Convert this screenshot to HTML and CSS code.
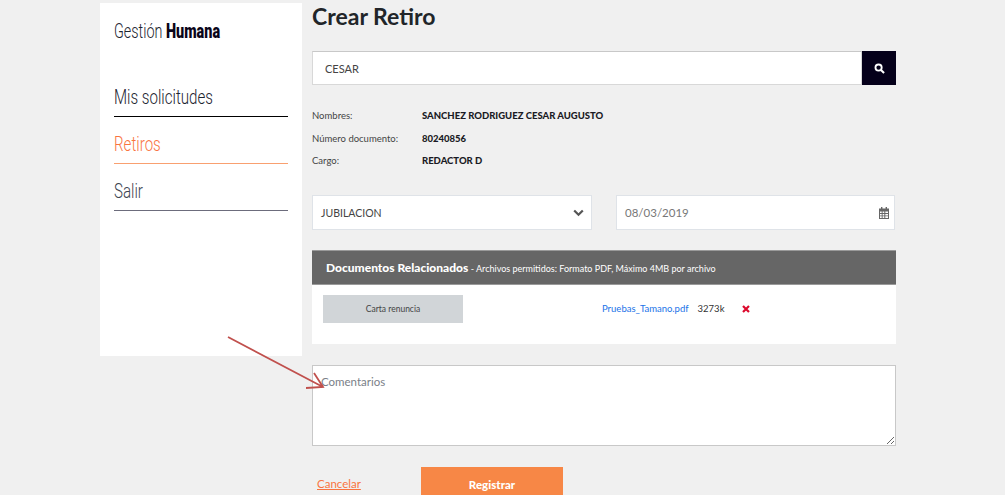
FILE: index.html
```html
<!DOCTYPE html>
<html lang="es">
<head>
    <meta charset="UTF-8">
    <meta name="viewport" content="width=device-width, initial-scale=1.0">
    <title>Crear Retiro</title>
    <link rel="stylesheet" href="styles.css">
</head>
<body>
<div class="page">
    <!-- Menu lateral -->
    <aside class="sidebar">
        <div class="brand"><span class="narrow">Gestión <strong>Humana</strong></span></div>
        <nav class="menu">
            <a class="menu-item menu-dark" href="#"><span class="narrow">Mis solicitudes</span></a>
            <a class="menu-item menu-active" href="#"><span class="narrow">Retiros</span></a>
            <a class="menu-item menu-muted" href="#"><span class="narrow">Salir</span></a>
        </nav>
    </aside>

    <!-- Formulario -->
    <main class="content">
        <h1>Crear Retiro</h1>

        <div class="search">
            <input class="search-input" type="text" value="CESAR">
            <button class="search-button" type="button" aria-label="Buscar">
                <svg width="11" height="11" viewBox="0 0 12 12"><circle cx="5" cy="5" r="3.4" fill="none" stroke="#fff" stroke-width="2"/><path d="M7.6 7.6 11 11" stroke="#fff" stroke-width="2.2"/></svg>
            </button>
        </div>

        <div class="info">
            <div class="info-row"><span class="info-label">Nombres:</span><b>SANCHEZ RODRIGUEZ CESAR AUGUSTO</b></div>
            <div class="info-row"><span class="info-label">Número documento:</span><b>80240856</b></div>
            <div class="info-row"><span class="info-label">Cargo:</span><b>REDACTOR D</b></div>
        </div>

        <div class="fields">
            <div class="field field-select">
                <span>JUBILACION</span>
                <svg width="11" height="8" viewBox="0 0 11 8"><path d="M1.2 1.5 5.5 5.8 9.8 1.5" fill="none" stroke="#555" stroke-width="2.2"/></svg>
            </div>
            <div class="field field-date">
                <span>08/03/2019</span>
                <svg width="10" height="12" viewBox="0 0 10 12"><path fill="#666" d="M2 0h1.4v1.500H6.600V0H8v1.500h2V12H0V1.500h2zM1 4.500V6h1.700V4.500zm2.600 0V6h1.700V4.500zm2.700 0V6H9V4.500zM1 7v1.400h1.700V7zm2.600 0v1.400h1.700V7zm2.700 0v1.400H9V7zM1 9.300V11h1.700V9.300zm2.600 0V11h1.700V9.300zm2.700 0V11H9V9.300z"/></svg>
            </div>
        </div>

        <section class="docs">
            <div class="docs-header"><strong>Documentos Relacionados</strong> - Archivos permitidos: Formato PDF, Máximo 4MB por archivo</div>
            <div class="docs-body">
                <div class="doc-type">Carta renuncia</div>
                <a class="doc-link" href="#">Pruebas_Tamano.pdf</a>
                <span class="doc-size">3273k</span>
                <svg class="doc-remove" width="8" height="8" viewBox="0 0 8 8"><path d="M1 1 7 7M7 1 1 7" stroke="#dc0a2d" stroke-width="2.200"/></svg>
            </div>
        </section>

        <textarea class="comments" placeholder="Comentarios"></textarea>

        <div class="actions">
            <a class="cancel" href="#">Cancelar</a>
            <button class="submit" type="button">Registrar</button>
        </div>
    </main>
</div>

<!-- Flecha de anotacion -->
<svg class="arrow" width="110" height="60" viewBox="0 0 110 60">
    <path d="M2 2 97 52M88 38 97 52 80 53" fill="none" stroke="#c0504d" stroke-width="1.800"/>
</svg>
</body>
</html>
```

FILE: styles.css
```css
html, body {
    height: 495px;
    overflow: hidden;
}

body {
    margin: 0;
    position: relative;
    background-color: #f0f0f0;
    color: #212529;
    font-family: Lato, Arial, sans-serif;
}

.page {
    display: flex;
    align-items: flex-start;
    gap: 10px;
    padding: 3px 0 0 100px;
}

/* Sidebar */
.sidebar {
    box-sizing: border-box;
    width: 202px;
    height: 353px;
    padding: 15px 14px 0;
    background-color: #fff;
}

/* Condensed look of the menu font */
.narrow {
    display: inline-block;
    white-space: nowrap;
    transform: scaleX(0.72);
    transform-origin: left center;
}

.brand {
    height: 26px;
    font-family: Roboto, sans-serif;
    font-weight: 300;
    font-size: 20px;
    line-height: 26px;
    color: #1c2430;
}

.brand strong {
    font-weight: 900;
    color: #0a0519;
}

.menu {
    display: flex;
    flex-direction: column;
    gap: 10px;
    margin-top: 36px;
}

.menu-item {
    display: block;
    height: 36px;
    font-family: Roboto, sans-serif;
    font-weight: 300;
    font-size: 21px;
    line-height: 34px;
    text-decoration: none;
    border-bottom: 1px solid;
}

.menu-dark {
    color: #1c2430;
    border-color: #000;
}

.menu-active {
    color: #f9743f;
    border-color: #f9a070;
}

.menu-muted {
    color: #3c4450;
    border-color: #6c6c7c;
}

/* Main column */
.content {
    width: 584px;
}

h1 {
    margin: 0;
    height: 48px;
    font-size: 23px;
    line-height: 27px;
    font-weight: 700;
}

.search {
    display: flex;
    height: 34px;
}

.search-input {
    flex: 1;
    min-width: 0;
    box-sizing: border-box;
    padding: 0 12px;
    border: 1px solid #d8d8d8;
    border-top-color: #c8c8c8;
    background-color: #fff;
    font-family: inherit;
    font-size: 11px;
    color: #444;
}

.search-button {
    display: flex;
    align-items: center;
    justify-content: center;
    width: 34px;
    padding: 0;
    border: none;
    background-color: #05001a;
}

.info {
    display: flex;
    flex-direction: column;
    gap: 5.500px;
    margin-top: 22px;
    font-size: 9.500px;
}

.info-row {
    display: flex;
    height: 17px;
    line-height: 17px;
    color: #444;
}

.info-label {
    width: 110px;
}

.info-row b {
    font-weight: 900;
    color: #1a1a24;
}

.fields {
    display: flex;
    gap: 24px;
    margin-top: 26px;
    padding-right: 1px;
}

.field {
    box-sizing: border-box;
    display: flex;
    align-items: center;
    justify-content: space-between;
    height: 35px;
    padding: 0 5px 0 8px;
    border: 1px solid #dfe3e8;
    background-color: #fff;
    font-size: 10.500px;
    color: #444;
}

.field-select {
    width: 280px;
    padding-right: 7px;
}

.field-date {
    flex: 1;
    font-size: 11.500px;
    color: #777;
}

/* Documents */
.docs {
    margin-top: 20px;
    background-color: #fff;
}

.docs-header {
    box-sizing: border-box;
    height: 35px;
    padding-left: 14px;
    border: 1px solid #9a9a9a;
    border-left: none;
    border-right: none;
    background-color: #666;
    color: #fff;
    font-size: 9px;
    line-height: 33px;
}

.docs-header strong {
    font-size: 12px;
    font-weight: 900;
}

.docs-body {
    display: flex;
    align-items: flex-start;
    height: 59px;
    padding: 10px 0 0 11px;
    box-sizing: border-box;
    font-size: 9.500px;
    line-height: 28px;
}

.doc-type {
    width: 140px;
    height: 28px;
    margin-right: 139px;
    background-color: #d1d5d8;
    text-align: center;
    font-size: 8.500px;
    color: #444;
}

.doc-link {
    color: #1a73e8;
    text-decoration: none;
}

.doc-size {
    margin-left: 9px;
    color: #333;
}

.doc-remove {
    margin: 10px 0 0 18px;
}

.comments {
    display: block;
    box-sizing: border-box;
    width: 100%;
    height: 81px;
    margin-top: 21px;
    padding: 9px 8px;
    border: 1px solid #c8c8c8;
    border-radius: 0;
    background-color: #fff;
    font-family: inherit;
    font-size: 11.500px;
}

.comments::placeholder {
    color: #7a8088;
}

.actions {
    display: flex;
    align-items: flex-start;
    margin-top: 21px;
}

.cancel {
    width: 104px;
    padding: 10px 0 0 5px;
    font-size: 11.500px;
    color: #f9743f;
}

.submit {
    width: 142px;
    height: 34px;
    border: none;
    background-color: #f78746;
    color: #fff;
    font-family: inherit;
    font-size: 11.500px;
    font-weight: 900;
}

/* Annotation over the page */
.arrow {
    position: absolute;
    left: 226px;
    top: 335px;
}
```
